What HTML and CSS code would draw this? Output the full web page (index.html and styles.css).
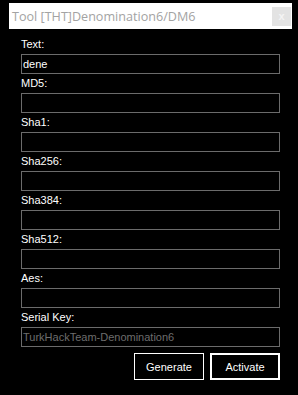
FILE: index.html
```html
<!DOCTYPE html>
<html>
<head>
<meta charset="utf-8">
<link rel="stylesheet" href="styles.css">
</head>
<body>
<div class="window">
  <div class="titlebar">
    <span class="title">Tool [THT]Denomination6/DM6</span>
    <span class="close">x</span>
  </div>
  <div class="form">
    <div class="label">Text:</div>
    <div class="field">dene</div>
    <div class="label">MD5:</div>
    <div class="field"></div>
    <div class="label">Sha1:</div>
    <div class="field"></div>
    <div class="label">Sha256:</div>
    <div class="field"></div>
    <div class="label">Sha384:</div>
    <div class="field"></div>
    <div class="label">Sha512:</div>
    <div class="field"></div>
    <div class="label">Aes:</div>
    <div class="field"></div>
    <div class="label">Serial Key:</div>
    <div class="field disabled">TurkHackTeam-Denomination6</div>
    <div class="buttons">
      <div class="btn">Generate</div>
      <div class="btn primary">Activate</div>
    </div>
  </div>
</div>
</body>
</html>
```
FILE: styles.css
```css
html, body {
  margin: 0;
  padding: 0;
  background: #000;
  width: 298px;
  height: 395px;
  overflow: hidden;
}
.window {
  font-family: "Liberation Sans", Arial, sans-serif;
  font-size: 11px;
  color: #fff;
}
.titlebar {
  margin: 3px 6px 0 9px;
  height: 26px;
  background: #fff;
  display: flex;
  align-items: center;
  justify-content: space-between;
}
.title {
  font-family: "Open Sans", "Noto Sans", sans-serif;
  font-size: 12.6px;
  color: #a3a3a3;
  padding-left: 3px;
}
.close {
  width: 19px;
  height: 19px;
  margin-right: 1px;
  background: #e3e3e3;
  color: #f4f4f4;
  font-family: "Liberation Sans", sans-serif;
  font-size: 11px;
  font-weight: bold;
  display: flex;
  align-items: center;
  justify-content: center;
}
.form {
  margin: 6px 0 0 21px;
  width: 259px;
  display: flex;
  flex-direction: column;
}
.label {
  height: 19px;
  box-sizing: border-box;
  padding-top: 3px;
  line-height: 13px;
}
.field {
  height: 20px;
  box-sizing: border-box;
  border: 1px solid #6b6b6b;
  padding-left: 1px;
  line-height: 18px;
  color: #fff;
}
.field.disabled {
  color: #6d6d6d;
}
.buttons {
  display: flex;
  justify-content: flex-end;
  gap: 6px;
  margin-top: 6px;
}
.btn {
  width: 70px;
  height: 27px;
  box-sizing: border-box;
  border: 1px solid #fff;
  display: flex;
  align-items: center;
  justify-content: center;
}
.btn.primary {
  border-width: 2px;
}
```
